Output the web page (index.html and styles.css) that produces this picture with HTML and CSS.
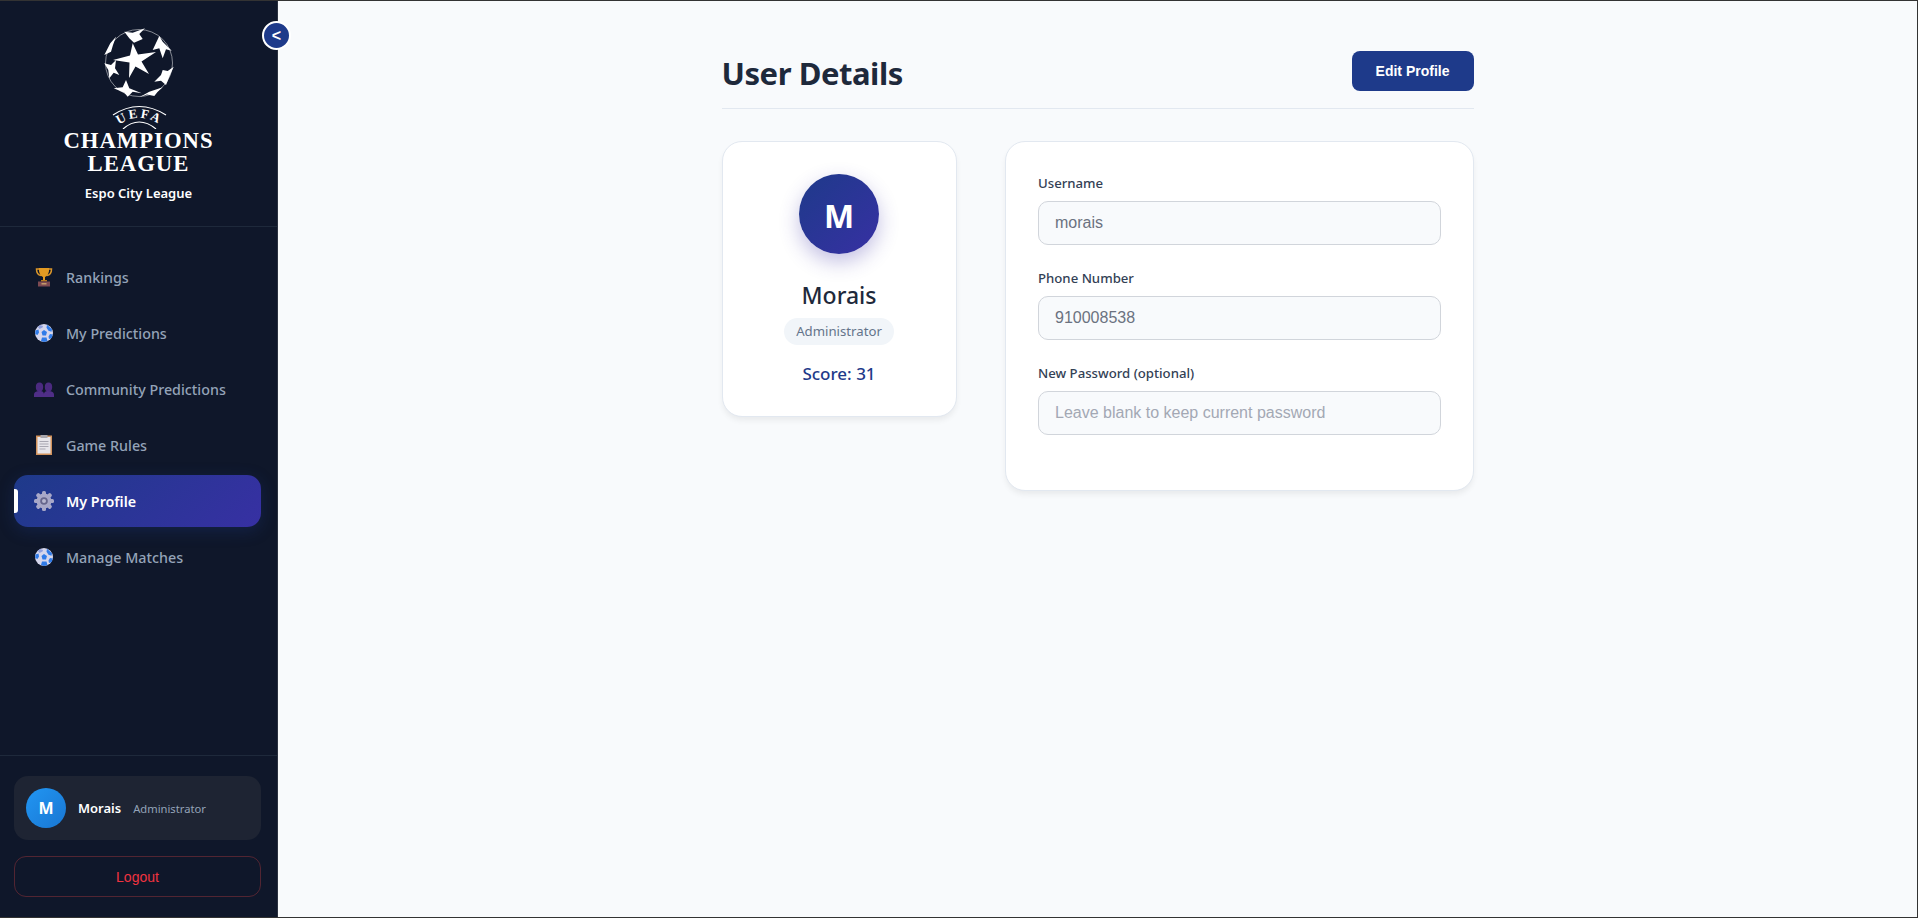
FILE: index.html
```html
<!DOCTYPE html>
<html lang="en">
<head>
    <meta charset="UTF-8">
    <meta name="viewport" content="width=device-width, initial-scale=1.0">
    <title>User Details</title>
    <link rel="stylesheet" href="styles.css">
</head>
<body>
<div class="app">
    <aside class="sidebar">
        <button class="toggle" type="button">&lt;</button>
        <div class="brand">
            <svg class="logo" width="160" height="102" viewBox="58 27 160 102">
                <circle cx="138" cy="63" r="33.500" fill="none" stroke="#fff" stroke-width=".7" opacity=".7"/>
                <g fill="#fff">
                    <!-- centre star -->
                    <polygon points="131.700,43.300 137,54.500 155,52 140.500,61.500 148,74 134.500,66.500 128,78 128.500,62.500 112,60 129,55.500"/>
                    <!-- stars round the edge -->
                    <polygon points="123.300,31.700 131.700,32.700 144,28.300 138.300,34 141.700,39 133,42.700 128.300,38.300"/>
                    <polygon points="158.300,36 161.700,41.700 170.700,50.700 165,49.300 161.700,58.300 158.300,48.300 151.700,50"/>
                    <polygon points="172.700,66.700 168.300,76.700 165,85 160,80.700 153.300,81.700 160,75 161.700,70 166.700,71"/>
                    <polygon points="138.300,97.300 148.300,91.700 161.700,87.300 156.700,91.700 153.300,96 146,94.500"/>
                    <polygon points="112.700,88.300 121.700,87.300 125,80 128.300,88.300 140.700,93.300 131.700,91.700 126.700,96.700 123.300,92.700"/>
                    <polygon points="103.300,63.300 110,65 115,60 114,68.300 118.300,75 112.700,72.700 108.300,78.300 107.300,70"/>
                    <polygon points="115,36.700 109.300,43.300 103.300,55 110,51.700 112,45"/>
                </g>
                <path d="M112 115Q138 98 165 115" fill="none" stroke="#fff" stroke-width="1.200"/>
                <path d="M122 129Q138 115 155 129" fill="none" stroke="#fff" stroke-width="1.200"/>
                <path id="uefa-arc" d="M117 125.500Q138 110 160 125.500" fill="none"/>
                <text class="logo-uefa"><textPath href="#uefa-arc" startOffset="50%" text-anchor="middle">UEFA</textPath></text>
            </svg>
            <div class="logo-text">CHAMPIONS</div>
            <div class="logo-text">LEAGUE</div>
            <div class="brand-name">Espo City League</div>
        </div>
        <nav class="nav">
            <a class="nav-item" href="#">
                <svg class="nav-icon" viewBox="0 0 20 20">
                    <path d="M5 2H2.500c0 4 1.200 6 4.500 6.500M15 2h2.500c0 4-1.200 6-4.500 6.500" fill="none" stroke="#d9952a" stroke-width="1.500"/>
                    <path d="M4.800 1h10.400c0 5-1.500 8-4.200 9v3H9v-3C6.300 9 4.800 6 4.800 1z" fill="#e39a22"/>
                    <rect x="7" y="13" width="6" height="1.500" fill="#b97a1f"/>
                    <rect x="4" y="14.500" width="12" height="5" fill="#7d4a52"/>
                    <rect x="7.500" y="16" width="5" height="1.500" fill="#c39a6a"/>
                </svg>
                <span>Rankings</span>
            </a>
            <a class="nav-item" href="#">
                <svg class="nav-icon" viewBox="0 0 20 20">
                    <circle cx="10" cy="10" r="9" fill="#d5d6ec"/>
                    <path d="M10 7l3 2-1 3.500H8.500L7.500 9z" fill="#2f7be8"/>
                    <path d="M13 1.800l5 4.500-.5 2.500-3-1-2-3zM1.500 7.500l3-1 .5 3-1.500 2.500-2.300-1zM8 14.500h4.500l1 3.500-3.500 1-3-1zM16 11l2.700.5-1 3.500-2.700 1-.5-2.500z" fill="#2f7be8"/>
                    <path d="M6 2l3 1-.5 1.500L5.500 6 4 4z" fill="#8f9fdd"/>
                </svg>
                <span>My Predictions</span>
            </a>
            <a class="nav-item" href="#">
                <svg class="nav-icon" viewBox="0 0 20 20">
                    <ellipse cx="5.500" cy="8" rx="3.700" ry="4.500" fill="#4b2a80"/>
                    <ellipse cx="14.500" cy="8" rx="3.700" ry="4.500" fill="#4b2a80"/>
                    <path d="M0 18v-2.500c0-2 2-3.500 5.500-3.500S10 13.500 10 15.500c0-2 1-3.500 4.500-3.500s5.500 1.500 5.500 3.500V18z" fill="#4f2e87"/>
                </svg>
                <span>Community Predictions</span>
            </a>
            <a class="nav-item" href="#">
                <svg class="nav-icon" viewBox="0 0 20 20">
                    <rect x="2" y="0.500" width="16" height="19.500" fill="#d1925c"/>
                    <rect x="3.500" y="2" width="13" height="16.500" fill="#e7e5ea"/>
                    <rect x="6.500" y="0" width="7" height="3" fill="#a9a7ad"/>
                    <path d="M5.500 6.500h9M5.500 9h9M5.500 11.500h9M5.500 14h6" stroke="#a9a7b2" stroke-width="1"/>
                </svg>
                <span>Game Rules</span>
            </a>
            <a class="nav-item active" href="#">
                <svg class="nav-icon" viewBox="0 0 20 20">
                    <g fill="#a8a8c8">
                        <circle cx="10" cy="10" r="7.500"/>
                        <rect x="8" y="0" width="4" height="20" rx="1.500"/>
                        <rect x="8" y="0" width="4" height="20" rx="1.500" transform="rotate(45 10 10)"/>
                        <rect x="8" y="0" width="4" height="20" rx="1.500" transform="rotate(90 10 10)"/>
                        <rect x="8" y="0" width="4" height="20" rx="1.500" transform="rotate(135 10 10)"/>
                    </g>
                    <circle cx="10" cy="10" r="3.800" fill="#66668c"/>
                    <circle cx="10" cy="10" r="2" fill="#b8b8d0"/>
                </svg>
                <span>My Profile</span>
            </a>
            <a class="nav-item" href="#">
                <svg class="nav-icon" viewBox="0 0 20 20">
                    <circle cx="10" cy="10" r="9" fill="#d5d6ec"/>
                    <path d="M10 7l3 2-1 3.500H8.500L7.500 9z" fill="#2f7be8"/>
                    <path d="M13 1.800l5 4.500-.5 2.500-3-1-2-3zM1.500 7.500l3-1 .5 3-1.500 2.500-2.300-1zM8 14.500h4.500l1 3.500-3.500 1-3-1zM16 11l2.700.5-1 3.500-2.700 1-.5-2.500z" fill="#2f7be8"/>
                    <path d="M6 2l3 1-.5 1.500L5.500 6 4 4z" fill="#8f9fdd"/>
                </svg>
                <span>Manage Matches</span>
            </a>
        </nav>
        <div class="side-footer">
            <div class="user-card">
                <div class="user-avatar">M</div>
                <span class="user-name">Morais</span>
                <span class="user-role">Administrator</span>
            </div>
            <button class="logout" type="button">Logout</button>
        </div>
    </aside>

    <main class="main">
        <div class="content">
            <div class="page-head">
                <h1>User Details</h1>
                <button class="edit-btn" type="button">Edit Profile</button>
            </div>
            <div class="grid">
                <section class="card profile-card">
                    <div class="profile-avatar">M</div>
                    <h2>Morais</h2>
                    <span class="badge">Administrator</span>
                    <div class="score">Score: 31</div>
                </section>
                <section class="card form-card">
                    <div class="field">
                        <label for="username">Username</label>
                        <input id="username" type="text" value="morais" disabled>
                    </div>
                    <div class="field">
                        <label for="phone">Phone Number</label>
                        <input id="phone" type="text" value="910008538" disabled>
                    </div>
                    <div class="field">
                        <label for="password">New Password (optional)</label>
                        <input id="password" type="password" placeholder="Leave blank to keep current password" disabled>
                    </div>
                </section>
            </div>
        </div>
    </main>
</div>
</body>
</html>
```

FILE: styles.css
```css
* { box-sizing: border-box; }
body { margin: 0; font-family: "Noto Sans", "Open Sans", sans-serif; background: #f8fafc; color: #1e293b; }
.app { display: flex; height: 918px; border: 1px solid #333; border-left: 0; overflow: hidden; }

/* sidebar */
.sidebar { position: relative; width: 278px; flex: none; display: flex; flex-direction: column; background: #0f172a; border-right: 1px solid #2b3240; }
.toggle { position: absolute; top: 20px; right: -14px; width: 29px; height: 29px; padding: 0; border: 2px solid #fff; border-radius: 50%; background: #1e3a8a; color: #fff; font-family: "Liberation Sans", sans-serif; font-size: 16px; font-weight: 700; z-index: 2; }
.brand { height: 226px; padding-top: 26px; border-bottom: 1px solid #1e293b; text-align: center; color: #fff; }
.logo { display: block; margin: 0 auto; }
.logo-uefa { font-family: "Liberation Serif", serif; font-size: 13px; font-weight: 700; fill: #fff; letter-spacing: 2.500px; }
.logo-text { font-family: "Liberation Serif", serif; font-size: 22.700px; font-weight: 700; line-height: 23px; letter-spacing: 1px; }
.brand-name { margin-top: 9px; font-size: 13px; line-height: 18px; font-weight: 600; }
.nav { flex: 1; display: flex; flex-direction: column; gap: 4px; padding: 24px 16px 0 14px; }
.nav-item { position: relative; display: flex; align-items: center; gap: 12px; height: 52px; padding-left: 20px; border-radius: 14px; color: #94a3b8; font-size: 14.300px; font-weight: 500; text-decoration: none; }
.nav-icon { width: 20px; height: 20px; flex: none; overflow: visible; }
.nav-item.active { color: #fff; font-weight: 600; background: linear-gradient(135deg, #1e3a8a, #3730a3); box-shadow: 0 4px 16px rgba(30, 58, 138, .3); }
.nav-item.active::before { content: ""; position: absolute; left: 0; top: 14px; width: 4px; height: 24px; background: #fff; border-radius: 0 3px 3px 0; }
.side-footer { padding: 20px 16px 20px 14px; border-top: 1px solid #1e293b; }
.user-card { display: flex; align-items: center; height: 64px; padding: 0 12px; border-radius: 14px; background: #1e2433; }
.user-avatar { width: 40px; height: 40px; border-radius: 50%; background: linear-gradient(135deg, #2196f3, #1976d2); color: #fff; display: flex; align-items: center; justify-content: center; font-size: 16px; font-weight: 700; }
.user-name { margin-left: 12px; color: #fff; font-size: 13px; font-weight: 600; }
.user-role { margin-left: 12px; color: #94a3b8; font-size: 11.200px; }
.logout { display: block; width: 100%; height: 41px; margin-top: 16px; border: 1px solid rgba(239, 68, 68, .3); border-radius: 12px; background: transparent; color: #ef3340; font-family: "Liberation Sans", sans-serif; font-size: 14px; }

/* main */
.main { flex: 1; background: #f8fafc; }
.content { max-width: 800px; margin: 0 auto; padding: 50px 24px 0; }
.page-head { display: flex; align-items: center; justify-content: space-between; padding-bottom: 17px; margin-bottom: 32px; border-bottom: 1px solid #e2e8f0; }
h1 { margin: 4px 0 0; font-size: 31px; line-height: 36px; font-weight: 700; letter-spacing: -.45px; color: #1e293b; }
.edit-btn { width: 122px; height: 40px; border: 0; border-radius: 8px; background: #1e3a8a; color: #fff; font-family: "Liberation Sans", sans-serif; font-size: 14px; font-weight: 700; }
.grid { display: grid; grid-template-columns: 235px 1fr; gap: 48.500px; align-items: start; }
.card { background: #fff; border: 1px solid #e2e8f0; border-radius: 20px; box-shadow: 0 4px 6px -1px rgba(0, 0, 0, .07); }
.profile-card { height: 276px; padding-top: 32px; display: flex; flex-direction: column; align-items: center; }
.profile-avatar { width: 80px; height: 80px; padding-top: 3px; border-radius: 50%; background: linear-gradient(135deg, #1e3a8a, #3730a3); box-shadow: 0 8px 20px rgba(55, 48, 163, .3); color: #fff; display: flex; align-items: center; justify-content: center; font-size: 32px; font-weight: 700; }
.profile-card h2 { margin: 26px 0 7px; font-size: 23px; line-height: 31px; font-weight: 500; color: #1e293b; }
.badge { height: 27px; padding: 0 12px; border-radius: 14px; background: #f1f5f9; color: #64748b; font-size: 13.200px; line-height: 27px; }
.score { margin-top: 17px; font-size: 17px; font-weight: 500; color: #1e3a8a; }
.form-card { height: 350px; padding: 32px 32px 0; }
.field { margin-bottom: 24px; }
.field label { display: block; margin-bottom: 8px; font-size: 13.200px; line-height: 19px; font-weight: 500; color: #334155; }
.field input { display: block; width: 100%; height: 44px; padding: 0 16px; border: 1px solid #d1d5db; border-radius: 10px; background: #f8fafc; color: #6b7280; font-family: "Liberation Sans", sans-serif; font-size: 16px; }
.field input::placeholder { color: #a3a8b4; opacity: 1; }
```
